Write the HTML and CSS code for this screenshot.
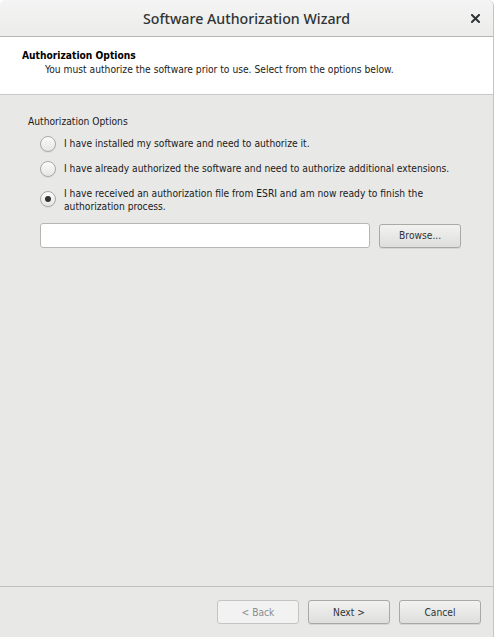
FILE: index.html
```html
<!DOCTYPE html>
<html lang="en">
<head>
	<meta charset="UTF-8">
	<title>Software Authorization Wizard</title>
	<link rel="stylesheet" href="styles.css">
</head>
<body>

	<div class="window">
		<div class="titlebar">
			<span class="title">Software Authorization Wizard</span>
			<svg class="close" width="9" height="9" viewBox="0 0 9 9">
				<path d="M1 1 L8 8 M8 1 L1 8" stroke="#2e3436" stroke-width="2" stroke-linecap="square"/>
			</svg>
		</div>

		<div class="header">
			<h2>Authorization Options</h2>
			<p>You must authorize the software prior to use. Select from the options below.</p>
		</div>

		<div class="content">
			<div class="group-label">Authorization Options</div>

			<label class="option">
				<input type="radio" name="auth" value="install">
				<span>I have installed my software and need to authorize it.</span>
			</label>
			<label class="option">
				<input type="radio" name="auth" value="extensions">
				<span>I have already authorized the software and need to authorize additional extensions.</span>
			</label>
			<label class="option">
				<input type="radio" name="auth" value="file" checked>
				<span>I have received an authorization file from ESRI and am now ready to finish the authorization process.</span>
			</label>

			<div class="file-row">
				<input type="text" class="file-input">
				<button type="button">Browse...</button>
			</div>
		</div>

		<div class="footer">
			<button type="button" disabled>&lt; Back</button>
			<button type="button">Next &gt;</button>
			<button type="button">Cancel</button>
		</div>
	</div>

</body>
</html>
```

FILE: styles.css
```css
html, body {
	margin: 0;
	height: 100%;
}

body {
	font-family: "DejaVu Sans Condensed", "DejaVu Sans", sans-serif;
	font-stretch: condensed;
	font-size: 10.2px;
	color: #2e3436;
	background-color: #fff;
}

.window {
	height: 100%;
	display: flex;
	flex-direction: column;
	background-color: #e8e8e7;
	border-right: 1px solid #c4c4c2;
	border-radius: 6px 6px 0 0;
	box-sizing: border-box;
	overflow: hidden;
}

.titlebar {
	height: 37px;
	flex-shrink: 0;
	display: flex;
	align-items: center;
	justify-content: center;
	position: relative;
	background: linear-gradient(#f4f4f4, #ececeb);
	border-bottom: 1px solid #b6b6b3;
	box-sizing: border-box;
}

.title {
	font-family: "Noto Sans", sans-serif;
	font-stretch: normal;
	font-size: 14.2px;
	font-weight: 500;
	color: #2e3436;
}

.close {
	position: absolute;
	right: 13px;
	top: 14px;
}

.header {
	background-color: #fff;
	height: 58px;
	flex-shrink: 0;
	padding: 13px 0 0 22px;
	box-sizing: border-box;
	border-bottom: 1px solid #c8c8c6;
}

.header h2 {
	margin: 0;
	font-size: 10.2px;
	font-weight: bold;
	color: #000;
}

.header p {
	margin: 3px 0 0 23px;
	color: #1a1a1a;
}

.content {
	flex: 1;
	padding: 21px 32px 0 28px;
	border-bottom: 1px solid #c0c0be;
}

.group-label {
	margin-bottom: 9px;
	color: #1a1a1a;
}

.option {
	display: flex;
	align-items: flex-start;
	margin-left: 12px;
	margin-bottom: 9px;
	line-height: 13px;
	color: #1a1a1a;
}

.option input {
	appearance: none;
	width: 16px;
	height: 16px;
	margin: 0 8px 0 0;
	flex-shrink: 0;
	border-radius: 50%;
	border: 1px solid #a8a8a6;
	background: linear-gradient(#fbfbfb, #e6e6e5);
	box-shadow: 0 1px 0 rgba(0, 0, 0, 0.06);
	box-sizing: border-box;
	display: grid;
	place-content: center;
}

.option span {
	padding-top: 1px;
}

.option:last-of-type {
	margin-top: 5px;
}

.option:last-of-type input {
	margin-top: 5px;
}

.option input:checked::before {
	content: "";
	width: 6px;
	height: 6px;
	border-radius: 50%;
	background-color: #2e3436;
}

.file-row {
	display: flex;
	align-items: center;
	margin: 10px 0 0 12px;
	gap: 9px;
}

.file-input {
	width: 331px;
	height: 25px;
	box-sizing: border-box;
	border: 1px solid #b6b6b3;
	border-radius: 3px;
	background-color: #fff;
}

button {
	width: 82px;
	height: 24px;
	font-family: inherit;
	font-stretch: condensed;
	font-size: 10.2px;
	color: #2e3436;
	border: 1px solid #a9a9a6;
	border-radius: 3px;
	background: linear-gradient(#f2f2f1, #dededd);
	box-shadow: 0 1px 0 rgba(0, 0, 0, 0.08);
}

button:disabled {
	color: #8b8e8f;
	background: #f2f2f2;
	border-color: #c4c4c2;
	box-shadow: none;
}

.footer {
	height: 50px;
	flex-shrink: 0;
	display: flex;
	justify-content: flex-end;
	align-items: flex-start;
	gap: 9px;
	padding: 13px 12px 0 0;
	box-sizing: border-box;
}
```
